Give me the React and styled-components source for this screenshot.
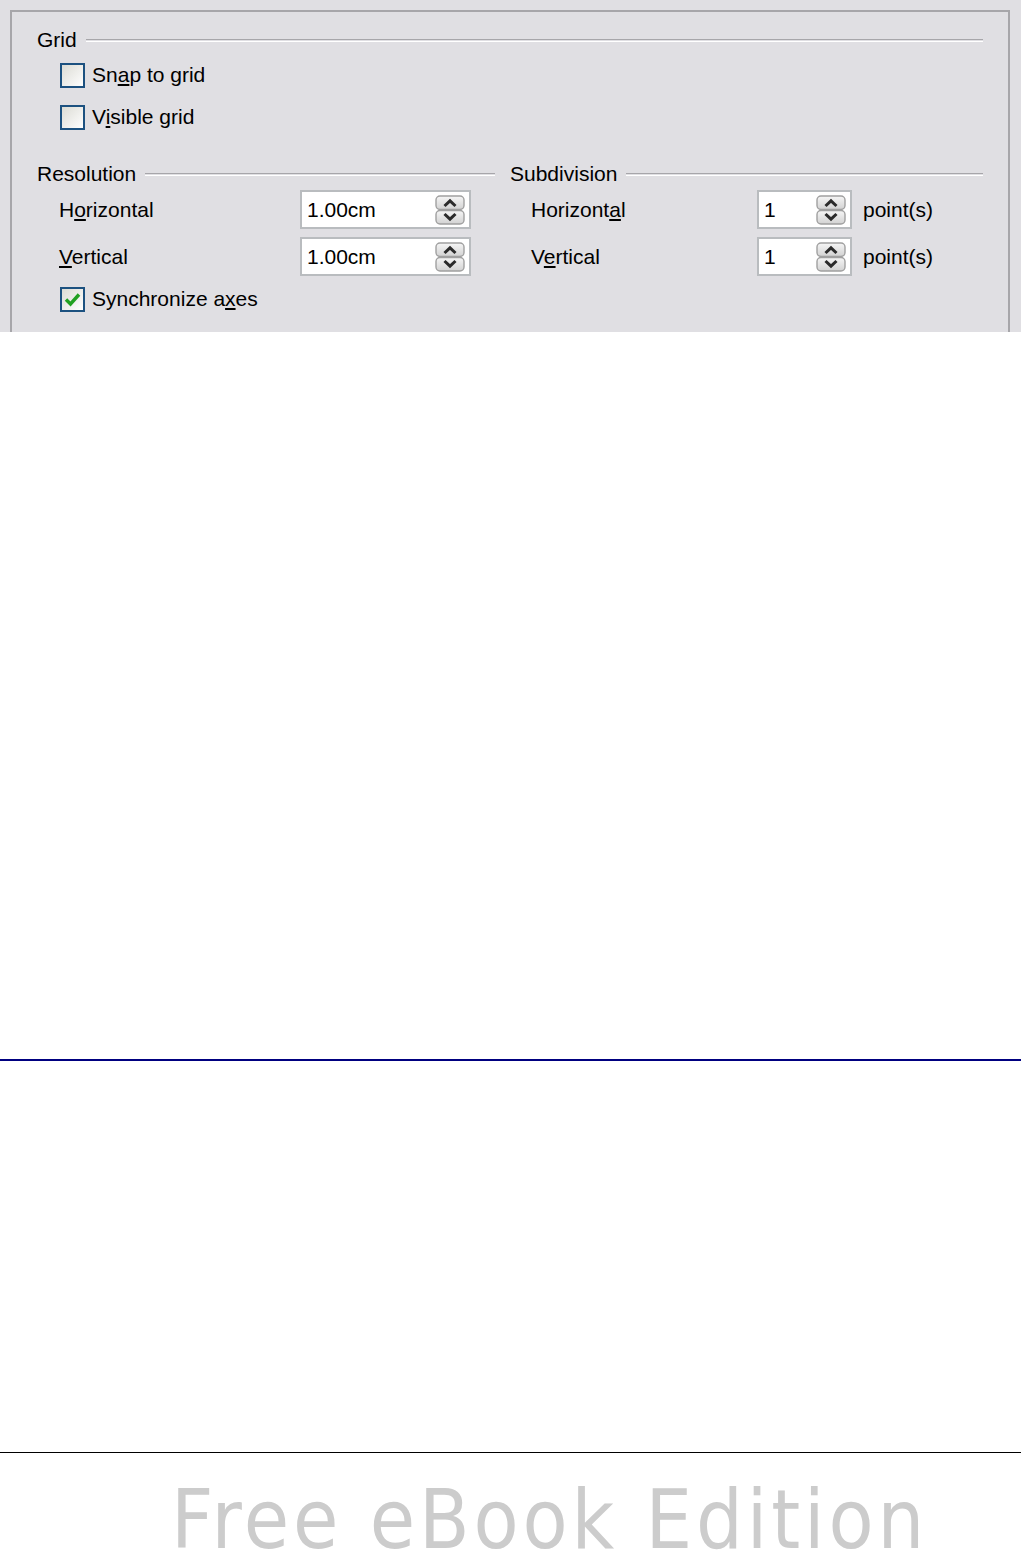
import React from "react";
import styled, { createGlobalStyle } from "styled-components";

const GlobalStyle = createGlobalStyle`
  html, body {
    margin: 0;
    padding: 0;
    background: #ffffff;
  }
  body {
    font-family: "Liberation Sans", Arial, sans-serif;
  }
`;

const Page = styled.div`
  width: 1021px;
  display: flex;
  flex-direction: column;
`;

const DialogArea = styled.div`
  height: 332px;
  background: #e0dfe3;
  padding: 10px 11px 0 10px;
  box-sizing: border-box;
  display: flex;
`;

const Panel = styled.div`
  flex: 1;
  border-top: 2px solid #a7a6aa;
  border-left: 2px solid #a7a6aa;
  border-right: 2px solid #a7a6aa;
  padding: 16px 25px 0 25px;
  display: flex;
  flex-direction: column;
  font-size: 21px;
  color: #000;
`;

const Header = styled.div`
  display: flex;
  align-items: center;
  height: 24px;
  gap: 9px;
  margin-top: ${(p) => p.$top || 0}px;
`;

const HeaderLine = styled.div`
  flex: 1;
  height: 1px;
  border-top: 1px solid #a7a6aa;
  border-bottom: 1px solid #ffffff;
`;

const CheckRow = styled.div`
  display: flex;
  align-items: center;
  gap: 7px;
  height: 26px;
  padding-left: 23px;
  margin-top: ${(p) => p.$top || 0}px;
`;

const Box = styled.div`
  width: 25px;
  height: 25px;
  box-sizing: border-box;
  border: 2px solid #1c5180;
  background: linear-gradient(135deg, #dcdcd5 0%, #f4f4f2 70%, #ffffff 100%);
  display: flex;
  align-items: center;
  justify-content: center;
`;

const Columns = styled.div`
  display: grid;
  grid-template-columns: 458px 1fr;
  column-gap: 15px;
  margin-top: 32px;
`;

const Column = styled.div`
  display: flex;
  flex-direction: column;
`;

const FieldRow = styled.div`
  display: flex;
  align-items: center;
  height: 39px;
  padding-left: ${(p) => p.$indent}px;
  margin-top: ${(p) => p.$top}px;
`;

const FieldLabel = styled.div`
  width: ${(p) => p.$width}px;
`;

const Input = styled.div`
  width: ${(p) => p.$width}px;
  height: 39px;
  box-sizing: border-box;
  border: 2px solid #b9bcbf;
  background: #ffffff;
  display: flex;
  align-items: center;
  justify-content: space-between;
  padding: 0 4px 0 5px;
`;

const Unit = styled.span`
  margin-left: 11px;
`;

const Mn = styled.span`
  text-decoration: underline;
  text-underline-offset: 2px;
`;

const BlueRule = styled.div`
  height: 2px;
  background: #000080;
  margin-top: 727px;
`;

const BlackRule = styled.div`
  height: 1px;
  background: #000000;
  margin-top: 391px;
`;

const Watermark = styled.div`
  margin-top: 26px;
  padding-left: 171px;
  font-family: "DejaVu Sans Condensed", "DejaVu Sans", sans-serif;
  font-stretch: condensed;
  font-size: 82px;
  line-height: 1;
  letter-spacing: 3.9px;
  color: #cccccc;
  white-space: nowrap;
`;

function Check() {
  return (
    <svg width="19" height="19" viewBox="0 0 19 19">
      <polyline points="3,9.5 7.5,14 16,4.5" fill="none" stroke="#21a121" strokeWidth="3.4" />
    </svg>
  );
}

function Spin() {
  return (
    <svg width="30" height="30" viewBox="0 0 30 30">
      <defs>
        <linearGradient id="sg" x1="0" y1="0" x2="0" y2="1">
          <stop offset="0" stopColor="#f6f6f6" />
          <stop offset="1" stopColor="#d2d2d2" />
        </linearGradient>
      </defs>
      <rect x="1" y="1" width="28" height="13.5" rx="4" fill="url(#sg)" stroke="#a0a0a0" strokeWidth="1.4" />
      <rect x="1" y="15.5" width="28" height="13.5" rx="4" fill="url(#sg)" stroke="#a0a0a0" strokeWidth="1.4" />
      <polyline points="9.5,11 15,5.8 20.5,11" fill="none" stroke="#2b2b2b" strokeWidth="3" />
      <polyline points="9.5,19 15,24.2 20.5,19" fill="none" stroke="#2b2b2b" strokeWidth="3" />
    </svg>
  );
}

function CheckBox({ label, checked, top }) {
  return (
    <CheckRow $top={top}>
      <Box>{checked && <Check />}</Box>
      <span>{label}</span>
    </CheckRow>
  );
}

function Field({ label, value, labelWidth, inputWidth, indent, top, unit }) {
  return (
    <FieldRow $indent={indent} $top={top}>
      <FieldLabel $width={labelWidth}>{label}</FieldLabel>
      <Input $width={inputWidth}>
        <span>{value}</span>
        <Spin />
      </Input>
      {unit && <Unit>{unit}</Unit>}
    </FieldRow>
  );
}

export default function App() {
  return (
    <Page>
      <GlobalStyle />
      <DialogArea>
        <Panel>
          <Header>
            <span>Grid</span>
            <HeaderLine />
          </Header>
          <CheckBox top={10} label={<>Sn<Mn>a</Mn>p to grid</>} />
          <CheckBox top={16} label={<>V<Mn>i</Mn>sible grid</>} />
          <Columns>
            <Column>
              <Header>
                <span>Resolution</span>
                <HeaderLine />
              </Header>
              <Field
                indent={22}
                top={4}
                labelWidth={241}
                inputWidth={171}
                label={<>H<Mn>o</Mn>rizontal</>}
                value="1.00cm"
              />
              <Field
                indent={22}
                top={8}
                labelWidth={241}
                inputWidth={171}
                label={<><Mn>V</Mn>ertical</>}
                value="1.00cm"
              />
              <CheckBox top={10} checked label={<>Synchronize a<Mn>x</Mn>es</>} />
            </Column>
            <Column>
              <Header>
                <span>Subdivision</span>
                <HeaderLine />
              </Header>
              <Field
                indent={21}
                top={4}
                labelWidth={226}
                inputWidth={95}
                label={<>Horizont<Mn>a</Mn>l</>}
                value="1"
                unit="point(s)"
              />
              <Field
                indent={21}
                top={8}
                labelWidth={226}
                inputWidth={95}
                label={<>V<Mn>e</Mn>rtical</>}
                value="1"
                unit="point(s)"
              />
            </Column>
          </Columns>
        </Panel>
      </DialogArea>
      <BlueRule />
      <BlackRule />
      <Watermark>Free eBook Edition</Watermark>
    </Page>
  );
}
